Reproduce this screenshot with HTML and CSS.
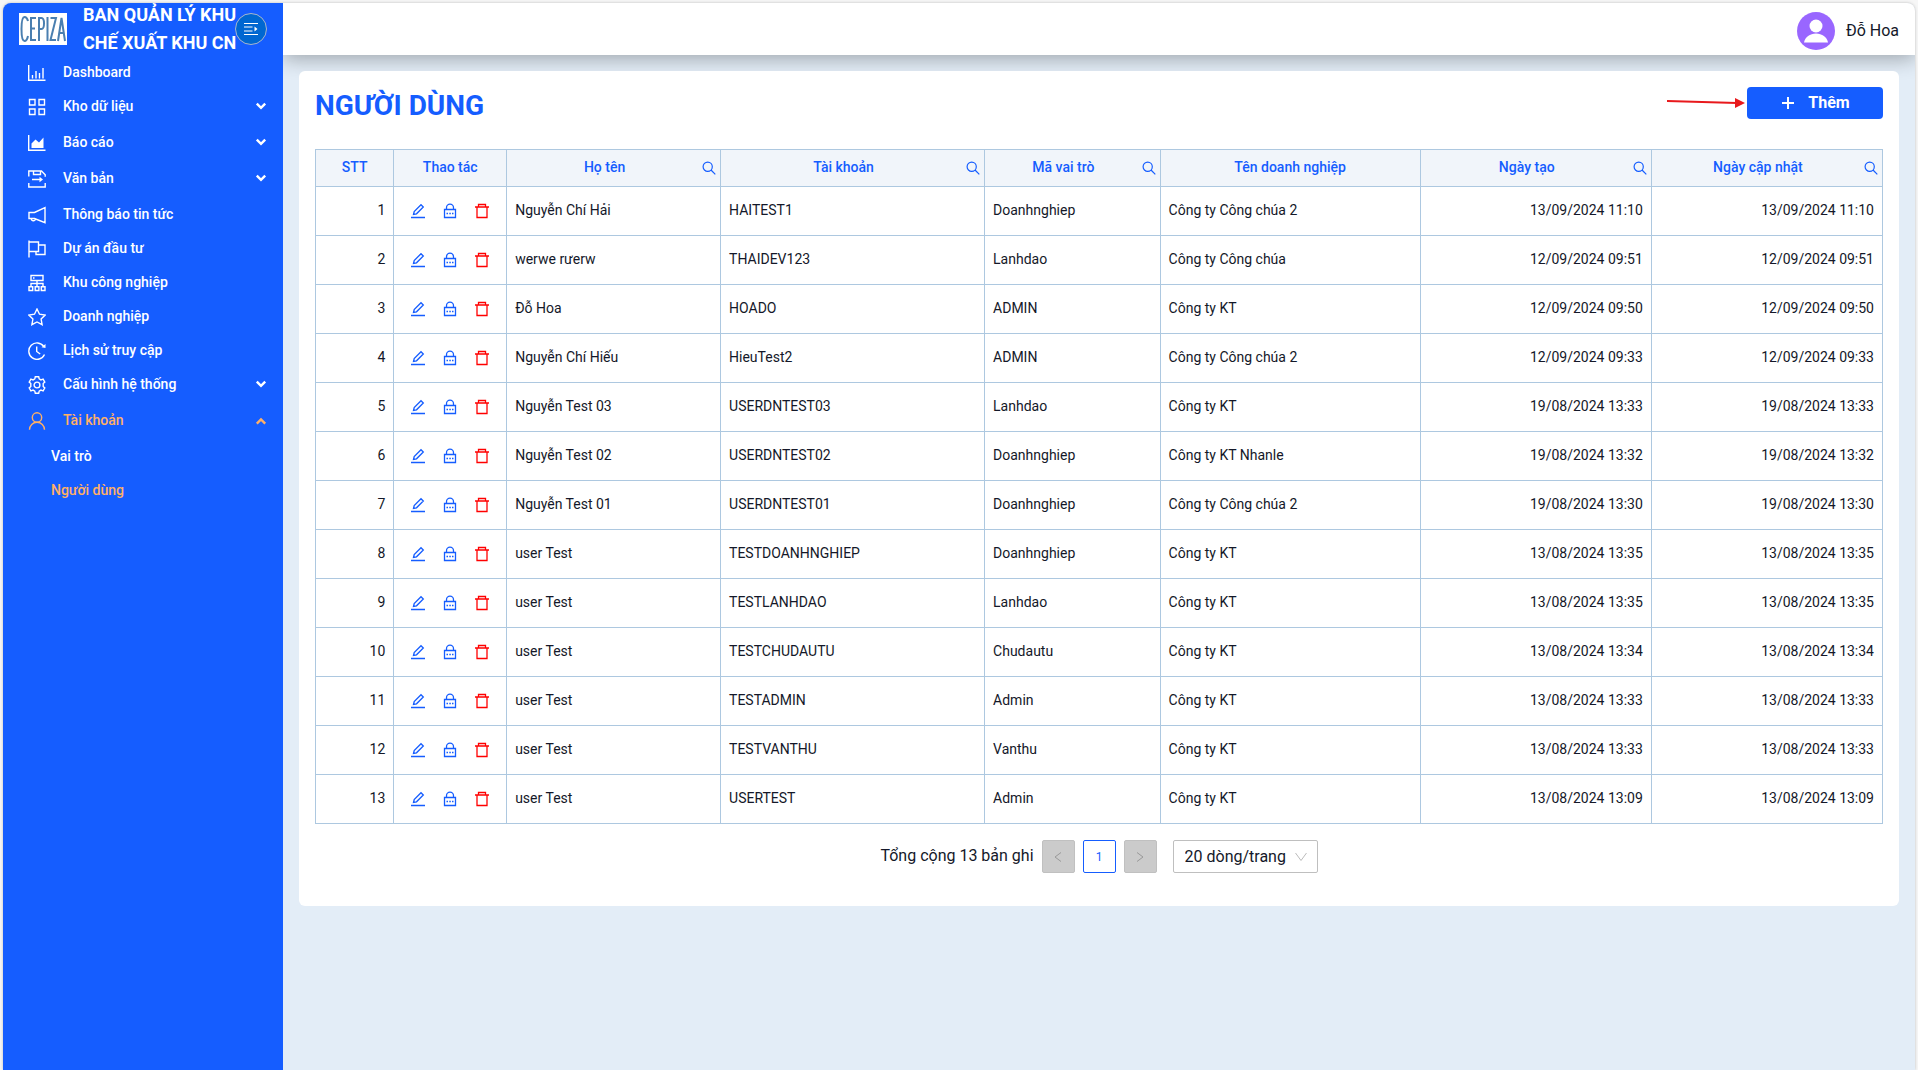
FILE: index.html
```html
<!DOCTYPE html>
<html lang="vi">
<head>
<meta charset="utf-8">
<title>Người dùng</title>
<link rel="stylesheet" href="styles.css">
</head>
<body>
<svg class="sprite" aria-hidden="true">
  <symbol id="i-bar" viewBox="0 0 18 18"><path d="M.7 1v15.300H17.500M4.500 11v3.500M8 7v7.500M11.500 9v5.500M15 4v10.500"/></symbol>
  <symbol id="i-grid" viewBox="0 0 18 18"><path d="M1.500 1.500h5.500v5.500h-5.500zM11 1.500h5.500v5.500h-5.500zM1.500 11h5.500v5.500h-5.500zM11 11h5.500v5.500h-5.500z"/></symbol>
  <symbol id="i-area" viewBox="0 0 18 18"><path d="M.7 1v15.300H17.500"/><path class="solid" d="M3.500 14V9.500L7.500 5.500l3.500 3 4.500-5V14z"/></symbol>
  <symbol id="i-doc" viewBox="0 0 18 18"><path d="M.8 6.500V1h12.700l3.700 3.700v2M5.500 1v3.500h7V1M.8 13v4h16.400v-4M4 9.500h9"/><path class="solid" d="M11.500 6.800l3.500 2.700-3.500 2.700z"/></symbol>
  <symbol id="i-horn" viewBox="0 0 18 18"><path d="M17 1.500v15.200L6.500 12.500H1v-6h5.500zM3.200 12.700a2.200 2.200 0 0 0 4.200.8"/></symbol>
  <symbol id="i-flag" viewBox="0 0 18 18"><path d="M1 .5V17.500M1 2h9.500v9.500H1M10.500 5H17v9.500H8v-3"/></symbol>
  <symbol id="i-cluster" viewBox="0 0 18 18"><path d="M3 1.500h12v5H3zM9 6.500v6M3 12.500V9.500h12v3M1 12.700h3.700v3.800H1zM7.200 12.700h3.700v3.800H7.200zM13.300 12.700H17v3.800h-3.700zM5 4h1.500"/></symbol>
  <symbol id="i-star" viewBox="0 0 18 18"><path d="M9 1l2.500 5.200 5.700.8-4.100 4 1 5.700L9 14l-5.100 2.700 1-5.700-4.100-4 5.700-.8z"/></symbol>
  <symbol id="i-history" viewBox="0 0 18 18"><path d="M15.800 4.500a8.200 8.200 0 1 0 .7 8M8.700 4.500v5l3.500 2.500"/><path class="solid" d="M17.500 2v4l-4-.8z"/></symbol>
  <symbol id="i-gear" viewBox="0 0 18 18"><path d="M7.300.8h3.400l.5 2.100 1.700 1 2.200-.8 1.700 3-1.600 1.500v2.800l1.600 1.500-1.700 3-2.200-.8-1.700 1-.5 2.100H7.300l-.5-2.100-1.700-1-2.200.8-1.700-3 1.600-1.500V7.600L1.200 6.100l1.700-3 2.200.8 1.700-1z"/><circle cx="9" cy="9" r="2.900"/></symbol>
  <symbol id="i-user" viewBox="0 0 18 18"><circle cx="9" cy="5.500" r="4.700"/><path d="M1.500 17.700a7.500 7.500 0 0 1 15 0"/></symbol>
  <symbol id="i-down" viewBox="0 0 10 10"><path d="M1.500 3L5 6.500 8.500 3"/></symbol>
  <symbol id="i-up" viewBox="0 0 10 10"><path d="M1.500 8L5 4.500 8.500 8"/></symbol>
  <symbol id="i-search" viewBox="0 0 14 14"><circle cx="5.700" cy="5.700" r="4.600"/><path d="M9 9l4.300 4.300"/></symbol>
  <symbol id="i-edit" viewBox="0 0 16 16"><path d="M1 14.500h14M3.500 11.500l.7-3L11 1.700l2.300 2.300-6.800 6.800z"/></symbol>
  <symbol id="i-lock" viewBox="0 0 16 16"><path d="M2.500 6.500h11v8h-11zM4.500 6.500V4.700a3.500 3.500 0 0 1 7 0v1.800M4.500 10.500h1.500M7.300 10.500h1.500M10 10.500h1.500"/></symbol>
  <symbol id="i-trash" viewBox="0 0 16 16"><path d="M1 4h14M4.500 4V1.500h7V4M3 4v10.500h10V4"/></symbol>
</svg>
<div class="frame">
  <aside class="sidebar">
    <div class="brand">
      <svg class="logo" viewBox="0 0 48 32" role="img" aria-label="CEPIZA"><rect width="48" height="32" fill="#fff"/><g fill="none" stroke="#4a7fb0" stroke-width="2"><path d="M9 8Q8 4 5.500 4Q2.500 4 2.500 16T5.500 28Q8 28 9 23M17 5h-5v22h5M12 15.500h4M20 28V5h2.500q2.500 0 2.500 5.500T22.500 16H20M28.500 4v24M31.500 5h5.500L31.500 27H37M39 28l3.500-23L46 28M40 20h5"/></g></svg>
      <p class="brand-name">BAN QUẢN LÝ KHU CHẾ XUẤT KHU CN</p>
      <button class="toggle" aria-label="Thu gọn menu"><svg viewBox="0 0 16 16"><path d="M1 2.500h14M1 6h8.500M1 10h8.500M1 13.500h14"/><path class="solid" d="M11.500 5.500v5L14.500 8z"/></svg></button>
    </div>
    <nav>
      <ul class="menu">
        <li><a href="#"><svg class="icon"><use href="#i-bar"/></svg>Dashboard</a></li>
        <li class="group"><a href="#"><svg class="icon"><use href="#i-grid"/></svg>Kho dữ liệu<svg class="caret"><use href="#i-down"/></svg></a></li>
        <li class="group"><a href="#"><svg class="icon"><use href="#i-area"/></svg>Báo cáo<svg class="caret"><use href="#i-down"/></svg></a></li>
        <li class="group"><a href="#"><svg class="icon"><use href="#i-doc"/></svg>Văn bản<svg class="caret"><use href="#i-down"/></svg></a></li>
        <li><a href="#"><svg class="icon"><use href="#i-horn"/></svg>Thông báo tin tức</a></li>
        <li><a href="#"><svg class="icon"><use href="#i-flag"/></svg>Dự án đầu tư</a></li>
        <li><a href="#"><svg class="icon"><use href="#i-cluster"/></svg>Khu công nghiệp</a></li>
        <li><a href="#"><svg class="icon"><use href="#i-star"/></svg>Doanh nghiệp</a></li>
        <li><a href="#"><svg class="icon"><use href="#i-history"/></svg>Lịch sử truy cập</a></li>
        <li class="group"><a href="#"><svg class="icon"><use href="#i-gear"/></svg>Cấu hình hệ thống<svg class="caret"><use href="#i-down"/></svg></a></li>
        <li class="group"><a href="#" class="active"><svg class="icon"><use href="#i-user"/></svg>Tài khoản<svg class="caret"><use href="#i-up"/></svg></a></li>
      </ul>
      <ul class="menu submenu">
        <li><a href="#">Vai trò</a></li>
        <li><a href="#" class="active">Người dùng</a></li>
      </ul>
    </nav>
  </aside>
  <div class="content">
    <header class="topbar">
      <svg class="avatar" viewBox="0 0 38 38"><circle cx="19" cy="19" r="19" fill="#9966ff"/><circle cx="19" cy="14" r="6.500" fill="#fff"/><path d="M7 30.500C8 25 13 21.500 19 21.500S30 25 31 30.500z" fill="#fff"/></svg>
      <span>Đỗ Hoa</span>
    </header>
    <main class="card">
      <div class="card-head">
        <h1>NGƯỜI DÙNG</h1>
        <svg class="arrow" viewBox="0 0 78 12" aria-hidden="true"><path d="M0 4l70 2" stroke="#e8191c" stroke-width="2"/><path d="M68 1v10l10-5z" fill="#e8191c" stroke="none"/></svg>
        <button class="add"><svg viewBox="0 0 12 12"><path d="M6 0v12M0 6h12"/></svg>Thêm</button>
      </div>
      <table>
        <colgroup><col class="c-no"><col class="c-act"><col class="c-name"><col class="c-acc"><col class="c-role"><col class="c-org"><col class="c-date"><col class="c-date"></colgroup>
        <thead><tr><th>STT</th><th>Thao tác</th><th class="find">Họ tên</th><th class="find">Tài khoản</th><th class="find">Mã vai trò</th><th>Tên doanh nghiệp</th><th class="find">Ngày tạo</th><th class="find">Ngày cập nhật</th></tr></thead>
        <tbody id="rows"></tbody>
      </table>
      <div class="pager">
        <span class="total">Tổng cộng 13 bản ghi</span>
        <button class="page" disabled aria-label="Trang trước"><svg viewBox="0 0 12 12"><path d="M9 1.500L3 6l6 4.500"/></svg></button>
        <button class="page current">1</button>
        <button class="page" disabled aria-label="Trang sau"><svg viewBox="0 0 12 12"><path d="M3 1.500L9 6l-6 4.500"/></svg></button>
        <div class="size">
          <select aria-label="Số dòng mỗi trang"><option>20 dòng/trang</option></select>
          <svg viewBox="0 0 12 12"><path d="M.5 2L6 9.500 11.500 2"/></svg>
        </div>
      </div>
    </main>
  </div>
</div>
<script src="app.js"></script>
</body>
</html>
```
FILE: styles.css
```css
* { box-sizing: border-box; }
body { margin: 0; padding: 3px 3px 0; min-height: 100vh; display: flex; background: #f6f6f6; color: #141829; font: 14px/22px Roboto, "Noto Sans", sans-serif; }
p, h1, ul { margin: 0; padding: 0; }
button { font: inherit; cursor: pointer; }
svg { fill: none; stroke: currentColor; flex: none; }
.solid { fill: currentColor; stroke: none; }
.sprite { position: absolute; width: 0; height: 0; }

.frame { flex: 1; display: flex; border-radius: 8px 8px 0 0; overflow: hidden; background: #e3edf7; box-shadow: 0 0 3px #bbb; }

.sidebar { position: relative; z-index: 1; width: 280px; flex: none; background: #155dff; color: #fff; }
.brand { height: 52px; display: flex; align-items: center; padding: 0 16px; }
.logo { width: 48px; height: 32px; stroke: none; margin-right: 16px; }
.brand-name { width: 160px; font-size: 18px; line-height: 28px; font-weight: 700; }
.toggle { width: 32px; height: 32px; flex: none; display: grid; place-items: center; margin-left: -8px; padding: 0; border: 1px solid #a9b6cc; border-radius: 50%; background: #0067d1; color: #fff; }
.toggle svg { width: 16px; height: 16px; }

.menu { list-style: none; }
.menu a { display: flex; align-items: center; height: 34px; padding: 0 16px 0 25px; color: #fff; font-weight: 500; text-decoration: none; }
.menu a.active { color: #ffb066; }
.group { margin-bottom: 2px; }
.icon { width: 18px; height: 18px; margin: 2px 17px 0 0; stroke-width: 1.4; }
.caret { width: 12px; height: 12px; margin-left: auto; stroke-width: 2; }
.submenu a { padding-left: 48px; }

.content { flex: 1; min-width: 0; }
.topbar { height: 52px; display: flex; align-items: center; justify-content: flex-end; gap: 11px; padding: 4px 16px 0; background: #fff; font-size: 16px; box-shadow: 0 4px 20px rgba(0, 0, 0, .3); }
.avatar { width: 38px; height: 38px; stroke: none; }

.card { position: relative; margin: 16px; padding: 16px 16px 33px; border-radius: 6px; background: #fff; }
.card-head { display: flex; align-items: flex-start; height: 62px; }
h1 { flex: 1; font-size: 28px; line-height: 38px; font-weight: 700; color: #155dff; }
.arrow { width: 78px; height: 12px; margin: 10px 2px 0 0; }
.add { width: 136px; height: 32px; display: flex; align-items: center; justify-content: center; gap: 14px; padding: 0 0 0 2px; border: 0; border-radius: 4px; background: #155dff; color: #fff; font-size: 16px; font-weight: 700; }
.add svg { width: 12px; height: 12px; stroke-width: 2; }

table { width: 100%; table-layout: fixed; border-collapse: collapse; }
.c-no { width: 5%; }
.c-act { width: 7.2%; }
.c-name { width: 13.65%; }
.c-acc { width: 16.85%; }
.c-role { width: 11.2%; }
.c-org { width: 16.6%; }
.c-date { width: 14.75%; }
th, td { border: 1px solid #adc8e0; padding: 0 8px 2px; text-align: left; }
th { height: 37px; background: #f1f5fa; color: #155dff; font-weight: 500; text-align: center; }
td { height: 49px; }
.num { text-align: right; }
.label { display: flex; align-items: center; }
.label span { flex: 1; }
.label button, .actions button { display: grid; padding: 0; border: 0; background: none; color: #155dff; }
.label button { margin-top: 2px; }
.label svg { width: 14px; height: 14px; stroke-width: 1.2; }
th.find { padding: 0 4px 2px 0; }
.tools { padding-bottom: 0; }
.actions { display: flex; justify-content: center; gap: 16px; }
.actions svg { width: 16px; height: 16px; stroke-width: 1.3; }
.actions .delete { color: #ff0000; }

.pager { display: flex; align-items: center; justify-content: center; margin-top: 16px; font-size: 16px; }
.total { margin-right: 8px; padding-bottom: 2px; }
.page { width: 33px; height: 33px; margin-right: 8px; display: grid; place-items: center; padding: 0; border: 1px solid #155dff; border-radius: 2px; background: #fff; color: #155dff; font-size: 12px; }
.page:disabled { background: #cbcbcb; border-color: #c0c0c0; color: #999; }
.page svg { width: 12px; height: 12px; }
.size { display: grid; align-items: center; margin-left: 8px; }
.size select, .size svg { grid-area: 1 / 1; }
.size select { width: 145px; height: 33px; padding: 0 11px; appearance: none; border: 1px solid #bfbfbf; border-radius: 2px; background: #fff; color: inherit; font: inherit; }
.size svg { width: 12px; height: 12px; margin-right: 11px; justify-self: end; color: #bbb; pointer-events: none; }
```
FILE: app.js
```js
const users = [
  ["Nguyễn Chí Hải", "HAITEST1", "Doanhnghiep", "Công ty Công chúa 2", "13/09/2024 11:10"],
  ["werwe rưerw", "THAIDEV123", "Lanhdao", "Công ty Công chúa", "12/09/2024 09:51"],
  ["Đỗ Hoa", "HOADO", "ADMIN", "Công ty KT", "12/09/2024 09:50"],
  ["Nguyễn Chí Hiếu", "HieuTest2", "ADMIN", "Công ty Công chúa 2", "12/09/2024 09:33"],
  ["Nguyễn Test 03", "USERDNTEST03", "Lanhdao", "Công ty KT", "19/08/2024 13:33"],
  ["Nguyễn Test 02", "USERDNTEST02", "Doanhnghiep", "Công ty KT Nhanle", "19/08/2024 13:32"],
  ["Nguyễn Test 01", "USERDNTEST01", "Doanhnghiep", "Công ty Công chúa 2", "19/08/2024 13:30"],
  ["user Test", "TESTDOANHNGHIEP", "Doanhnghiep", "Công ty KT", "13/08/2024 13:35"],
  ["user Test", "TESTLANHDAO", "Lanhdao", "Công ty KT", "13/08/2024 13:35"],
  ["user Test", "TESTCHUDAUTU", "Chudautu", "Công ty KT", "13/08/2024 13:34"],
  ["user Test", "TESTADMIN", "Admin", "Công ty KT", "13/08/2024 13:33"],
  ["user Test", "TESTVANTHU", "Vanthu", "Công ty KT", "13/08/2024 13:33"],
  ["user Test", "USERTEST", "Admin", "Công ty KT", "13/08/2024 13:09"],
];

const action = (cls, label, icon) =>
  `<button class="${cls}" aria-label="${label}"><svg><use href="#${icon}"/></svg></button>`;

document.getElementById("rows").innerHTML = users.map(([name, account, role, org, date], i) => `
  <tr>
    <td class="num">${i + 1}</td>
    <td class="tools"><div class="actions">${action("edit", "Sửa", "i-edit")}${action("lock", "Đổi mật khẩu", "i-lock")}${action("delete", "Xóa", "i-trash")}</div></td>
    <td>${name}</td><td>${account}</td><td>${role}</td><td>${org}</td>
    <td class="num">${date}</td><td class="num">${date}</td>
  </tr>`).join("");

document.querySelectorAll("th.find").forEach((th) => {
  th.innerHTML = `<div class="label"><span>${th.textContent}</span>${action("search", "Tìm kiếm", "i-search")}</div>`;
});
```
